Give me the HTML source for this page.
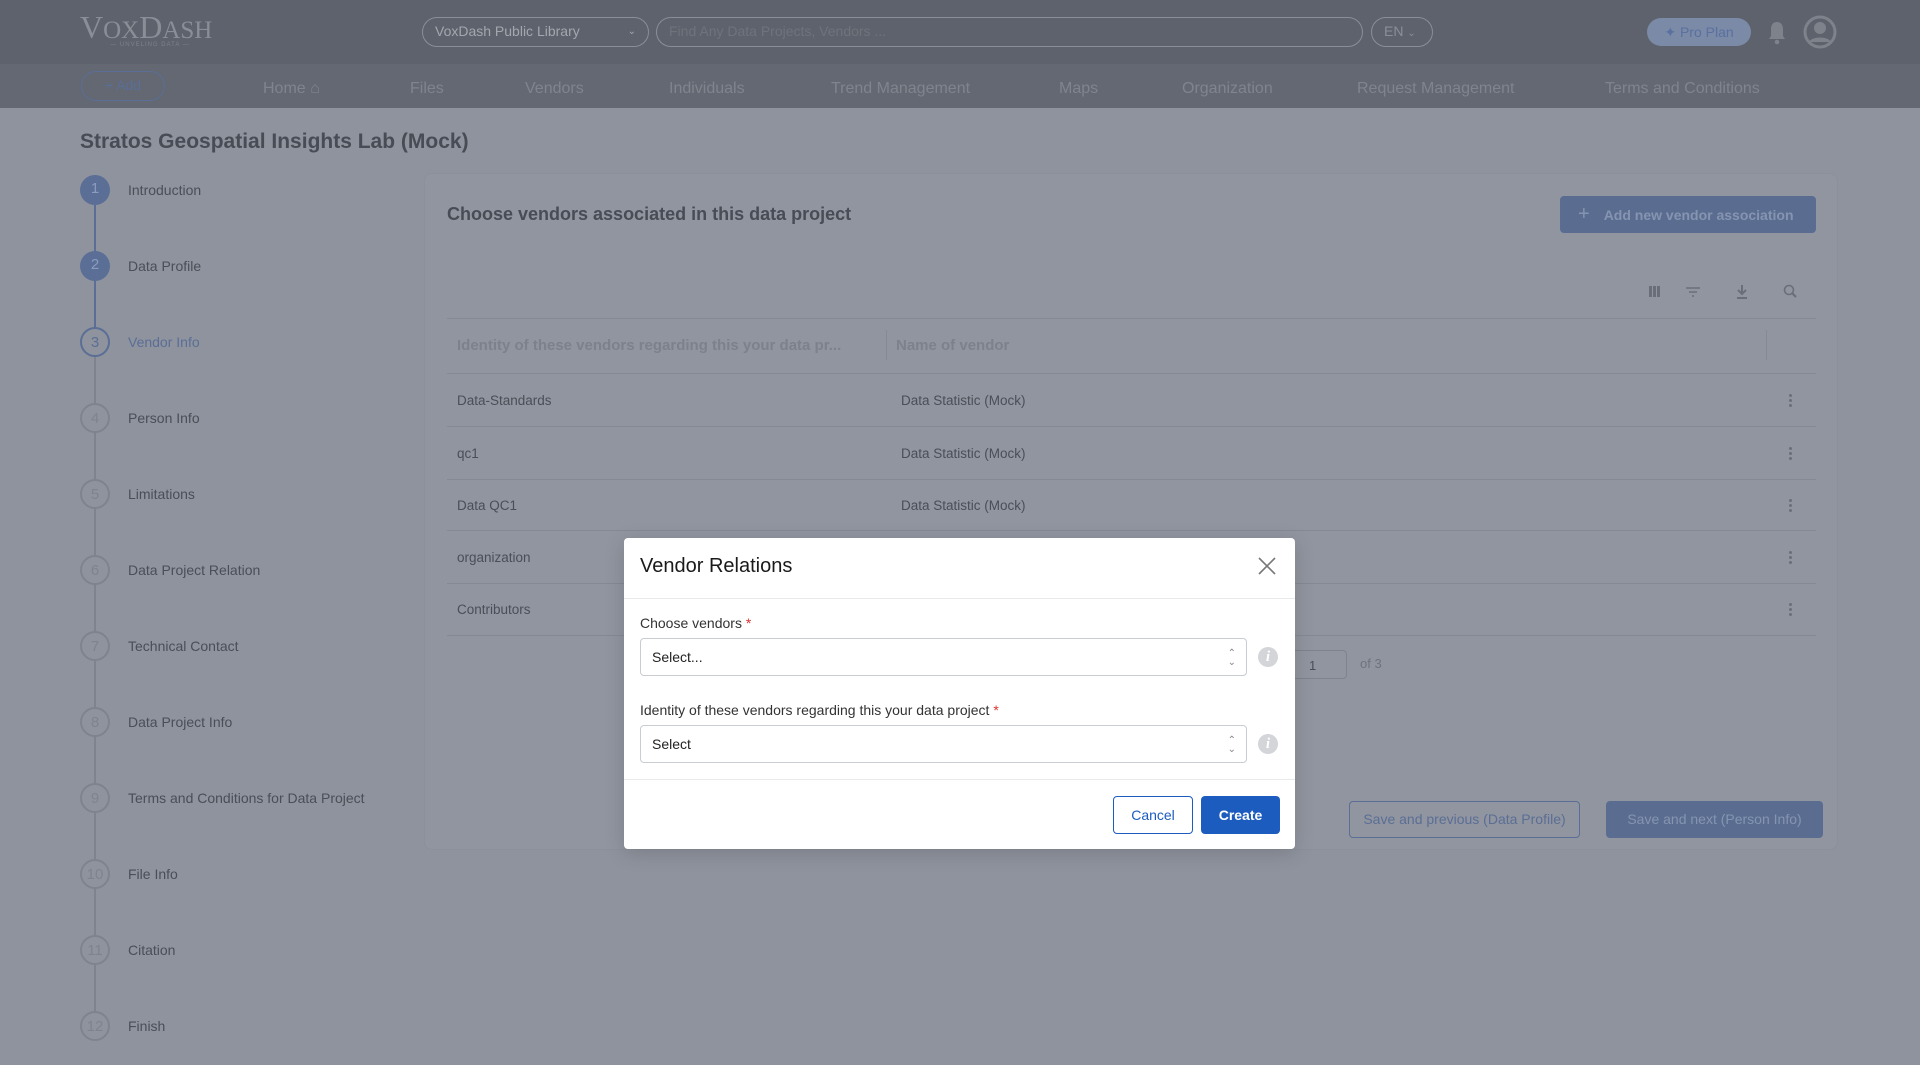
<!DOCTYPE html>
<html><head><meta charset="utf-8"><style>
*{box-sizing:border-box;margin:0;padding:0}
body{width:1920px;height:1065px;overflow:hidden;background:#8f939d;font-family:"Liberation Sans",sans-serif;position:relative;color:#484c55}
.a{position:absolute;white-space:nowrap}
.top{left:0;top:0;width:1920px;height:64px;background:#5d626c}
.nav{left:0;top:64px;width:1920px;height:44px;background:#636873}
.nv{top:80px;font-size:16px;color:#80848d;white-space:nowrap}
.pill{border:1.5px solid #8a8e97;border-radius:16px;height:30px;top:17px;color:#8a8e97;font-size:14px;line-height:27px;padding-left:12px}
.step{font-size:14px;color:#4a4e57}
.circ{width:30px;height:30px;border-radius:50%;left:80px;text-align:center;line-height:27px;font-size:15px}
.row{left:447px;width:1369px;height:1px;background:#858993}
.cell{font-size:13.5px;color:#4a4e57}
.keb{left:1789px;width:3px}
.keb i{display:block;width:3px;height:3px;border-radius:50%;background:#6a6e78;margin-bottom:2px}
.modal{left:624px;top:538px;width:671px;height:311px;background:#fff;border-radius:4px;box-shadow:0 4px 20px rgba(0,0,0,.15)}
.sel{left:16px;width:607px;height:38px;border:1px solid #c9ccd1;border-radius:4px;font-size:14px;color:#222;line-height:36px;padding-left:11px}
.lab{left:16px;font-size:14px;color:#333}
.lab b{color:#e03131;font-weight:normal}
.info{left:634px;width:20px;height:20px;border-radius:50%;background:#d3d5d9;color:#fff;font-weight:bold;font-family:"Liberation Serif",serif;font-style:italic;text-align:center;line-height:20px;font-size:15px}
</style></head><body>
<div class="a top"></div>
<div class="a nav"></div>
<div class="a" style="left:80px;top:9px;font-family:'Liberation Serif',serif;font-size:32px;color:#8a8e97">V<span style="font-size:25px">OX</span>D<span style="font-size:25px">ASH</span></div>
<div class="a" style="left:82px;top:42px;width:136px;font-size:6px;color:#7d818a;text-align:center;letter-spacing:1px">— UNVELING DATA —</div>
<div class="a pill" style="left:422px;width:227px;color:#a3a7ae">VoxDash Public Library<span style="position:absolute;right:12px;font-size:10px">⌄</span></div>
<div class="a pill" style="left:656px;width:707px;color:#6f737c">Find Any Data Projects, Vendors ...</div>
<div class="a pill" style="left:1371px;width:62px">EN <span style="font-size:10px">⌄</span></div>
<div class="a" style="left:1647px;top:18px;width:104px;height:28px;border-radius:14px;background:#7b8aa6;color:#5970a0;font-size:14px;line-height:28px;text-align:center">✦ Pro Plan</div>
<svg class="a" style="left:1766px;top:20px" width="22" height="26" viewBox="0 0 22 26"><path d="M11 2c-4 0-6 3-6 7v7l-2 3h16l-2-3V9c0-4-2-7-6-7z" fill="#7e828b"/><circle cx="11" cy="22" r="2.3" fill="#7e828b"/></svg>
<svg class="a" style="left:1803px;top:14px" width="34" height="36" viewBox="0 0 34 36"><circle cx="17" cy="18" r="15" fill="none" stroke="#7e828b" stroke-width="3"/><circle cx="17" cy="14" r="6" fill="#7e828b"/><path d="M6 28c3-6 19-6 22 0" fill="#7e828b"/></svg>
<div class="a" style="left:81px;top:71px;width:84px;height:30px;border:1.5px solid #5a6e96;border-radius:15px;color:#5a6e96;font-size:14px;line-height:27px;text-align:center">+ Add</div>
<div class="a nv" style="left:263px">Home ⌂</div>
<div class="a nv" style="left:410px">Files</div>
<div class="a nv" style="left:525px">Vendors</div>
<div class="a nv" style="left:669px">Individuals</div>
<div class="a nv" style="left:831px">Trend Management</div>
<div class="a nv" style="left:1059px">Maps</div>
<div class="a nv" style="left:1182px">Organization</div>
<div class="a nv" style="left:1357px">Request Management</div>
<div class="a nv" style="left:1605px">Terms and Conditions</div>

<div class="a" style="left:80px;top:130px;font-size:21px;font-weight:bold;color:#484c55">Stratos Geospatial Insights Lab (Mock)</div>
<div class="a" style="left:94px;top:205px;width:2px;height:130px;background:#5a6e96"></div>
<div class="a" style="left:94px;top:350px;width:2px;height:680px;background:#7f838d"></div>
<div class="a circ" style="top:175px;background:#5a6e96;color:#8a9cc0">1</div>
<div class="a circ" style="top:251px;background:#5a6e96;color:#8a9cc0">2</div>
<div class="a circ" style="top:327px;border:2px solid #5a6e96;color:#5a6e96;background:#8f939d">3</div>
<div class="a circ" style="top:403px;border:2px solid #7f838d;color:#7f838d;background:#8f939d">4</div>
<div class="a circ" style="top:479px;border:2px solid #7f838d;color:#7f838d;background:#8f939d">5</div>
<div class="a circ" style="top:555px;border:2px solid #7f838d;color:#7f838d;background:#8f939d">6</div>
<div class="a circ" style="top:631px;border:2px solid #7f838d;color:#7f838d;background:#8f939d">7</div>
<div class="a circ" style="top:707px;border:2px solid #7f838d;color:#7f838d;background:#8f939d">8</div>
<div class="a circ" style="top:783px;border:2px solid #7f838d;color:#7f838d;background:#8f939d">9</div>
<div class="a circ" style="top:859px;border:2px solid #7f838d;color:#7f838d;background:#8f939d">10</div>
<div class="a circ" style="top:935px;border:2px solid #7f838d;color:#7f838d;background:#8f939d">11</div>
<div class="a circ" style="top:1011px;border:2px solid #7f838d;color:#7f838d;background:#8f939d">12</div>
<div class="a step" style="left:128px;top:182px">Introduction</div>
<div class="a step" style="left:128px;top:258px">Data Profile</div>
<div class="a step" style="left:128px;top:334px;color:#5a6e96">Vendor Info</div>
<div class="a step" style="left:128px;top:410px">Person Info</div>
<div class="a step" style="left:128px;top:486px">Limitations</div>
<div class="a step" style="left:128px;top:562px">Data Project Relation</div>
<div class="a step" style="left:128px;top:638px">Technical Contact</div>
<div class="a step" style="left:128px;top:714px">Data Project Info</div>
<div class="a step" style="left:128px;top:790px">Terms and Conditions for Data Project</div>
<div class="a step" style="left:128px;top:866px">File Info</div>
<div class="a step" style="left:128px;top:942px">Citation</div>
<div class="a step" style="left:128px;top:1018px">Finish</div>

<div class="a" style="left:424px;top:173px;width:1414px;height:677px;background:#91959f;border-radius:8px;border:1px solid #8c9099"></div>
<div class="a" style="left:447px;top:204px;font-size:18px;font-weight:bold;color:#484c55">Choose vendors associated in this data project</div>
<div class="a" style="left:1560px;top:196px;width:256px;height:37px;background:#5a6d90;border-radius:4px;color:#8594b0;font-size:14px;line-height:37px;font-weight:bold"><span style="margin:0 14px 0 18px;font-size:20px;font-weight:normal">+</span>Add new vendor association</div>
<svg class="a" style="left:1647px;top:283px" width="160" height="18" viewBox="0 0 160 18"><rect x="2" y="3" width="3" height="11" fill="#6a6e78"/><rect x="6" y="3" width="3" height="11" fill="#6a6e78"/><rect x="10" y="3" width="3" height="11" fill="#6a6e78"/><path d="M39 5h14M42 9h8M45 13h2" stroke="#6a6e78" stroke-width="1.6"/><path d="M95 2v9M91 7l4 4 4-4M90 15h10" stroke="#6a6e78" stroke-width="2" fill="none"/><circle cx="142" cy="7" r="4.5" stroke="#6a6e78" stroke-width="1.6" fill="none"/><path d="M145 10l4 4" stroke="#6a6e78" stroke-width="2"/></svg>
<div class="a row" style="top:318px"></div>
<div class="a" style="left:457px;top:337px;font-size:15px;font-weight:bold;color:#7d818b">Identity of these vendors regarding this your data pr...</div>
<div class="a" style="left:886px;top:330px;width:1px;height:30px;background:#858993"></div>
<div class="a" style="left:896px;top:337px;font-size:15px;font-weight:bold;color:#7d818b">Name of vendor</div>
<div class="a" style="left:1766px;top:330px;width:1px;height:30px;background:#858993"></div>
<div class="a row" style="top:373px"></div>
<div class="a cell" style="left:457px;top:393px">Data-Standards</div><div class="a cell" style="left:901px;top:393px">Data Statistic (Mock)</div>
<div class="a row" style="top:426px"></div>
<div class="a cell" style="left:457px;top:446px">qc1</div><div class="a cell" style="left:901px;top:446px">Data Statistic (Mock)</div>
<div class="a row" style="top:479px"></div>
<div class="a cell" style="left:457px;top:498px">Data QC1</div><div class="a cell" style="left:901px;top:498px">Data Statistic (Mock)</div>
<div class="a row" style="top:530px"></div>
<div class="a cell" style="left:457px;top:550px">organization</div>
<div class="a row" style="top:583px"></div>
<div class="a cell" style="left:457px;top:602px">Contributors</div>
<div class="a row" style="top:635px"></div>
<div class="a keb" style="top:394px"><i></i><i></i><i></i></div>
<div class="a keb" style="top:447px"><i></i><i></i><i></i></div>
<div class="a keb" style="top:499px"><i></i><i></i><i></i></div>
<div class="a keb" style="top:551px"><i></i><i></i><i></i></div>
<div class="a keb" style="top:603px"><i></i><i></i><i></i></div>
<div class="a" style="left:1280px;top:650px;width:67px;height:29px;border:1px solid #7f838d;border-radius:4px;font-size:13px;padding:7px 0 0 28px;color:#4a4e57">1</div>
<div class="a" style="left:1360px;top:656px;font-size:13px;color:#6f737c">of 3</div>
<div class="a" style="left:1349px;top:801px;width:231px;height:37px;border:1px solid #5a6e96;border-radius:4px;color:#5a6e96;font-size:14px;text-align:center;line-height:35px">Save and previous (Data Profile)</div>
<div class="a" style="left:1606px;top:801px;width:217px;height:37px;background:#5a6d90;border-radius:4px;color:#8594b0;font-size:14px;text-align:center;line-height:37px">Save and next (Person Info)</div>

<div class="a modal">
 <div class="a" style="left:16px;top:17px;font-size:20px;color:#1a1a1a">Vendor Relations</div>
 <svg class="a" style="left:633px;top:18px" width="20" height="20" viewBox="0 0 20 20"><path d="M2 2l16 16M18 2L2 18" stroke="#777" stroke-width="1.6"/></svg>
 <div class="a" style="left:0;top:60px;width:671px;height:1px;background:#e8e9eb"></div>
 <div class="a lab" style="top:77px">Choose vendors<b> *</b></div>
 <div class="a sel" style="top:100px">Select...<span style="position:absolute;right:10px;top:0;font-size:10px;color:#888;line-height:9px;padding-top:10px;text-align:center">⌃<br>⌄</span></div>
 <div class="a info" style="top:109px">i</div>
 <div class="a lab" style="top:164px">Identity of these vendors regarding this your data project<b> *</b></div>
 <div class="a sel" style="top:187px">Select<span style="position:absolute;right:10px;top:0;font-size:10px;color:#888;line-height:9px;padding-top:10px;text-align:center">⌃<br>⌄</span></div>
 <div class="a info" style="top:196px">i</div>
 <div class="a" style="left:0;top:241px;width:671px;height:1px;background:#e8e9eb"></div>
 <div class="a" style="left:489px;top:258px;width:80px;height:38px;border:1px solid #1c5cbf;border-radius:4px;color:#1c5cbf;font-size:14px;text-align:center;line-height:36px">Cancel</div>
 <div class="a" style="left:577px;top:258px;width:79px;height:38px;background:#1c5cbf;border-radius:4px;color:#fff;font-size:14px;font-weight:bold;text-align:center;line-height:38px">Create</div>
</div>
</body></html>
